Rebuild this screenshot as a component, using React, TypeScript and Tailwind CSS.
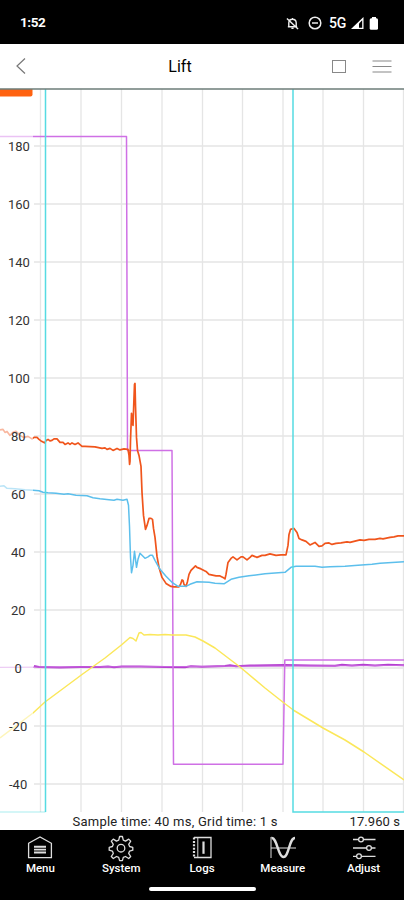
import React from "react";

const GRID_X = [40.5, 81, 121.5, 162, 202.5, 242.5, 283, 323, 363.5, 403.5];
const TICKS = [180, 160, 140, 120, 100, 80, 60, 40, 20, 0, -20, -40];
const tickY = (v: number) => 668 - v * 2.9;

const ORANGE =
  "M0 429.5 L3 429 L5 432 L7 431 L10 435 L13 432 L16 431 L20 435 L24 437 L28 436 L32 438.5 L34 437 L37 437 L39 439 L41 440.5 L43 441.5 L45 442.5 L46 440 L48 439 L50 440.5 L52 440 L54 438.5 L57 438.5 L60 442 L63 442 L65 444 L68 442.5 L70 444 L72 442.5 L75 444 L78 442.5 L82 446 L85 446 L95 446.5 L102 448 L105 447.5 L107 449 L110 448 L113 450 L117 448 L120 449.5 L124 448.5 L128 449 L129 455 L129.6 464 L130 461 L130.5 440 L131.5 413 L132.5 422 L133 425 L134.5 384 L135 383 L135.5 405 L136.5 437 L137.5 450 L139 455 L141 466 L142 492 L143.5 515 L145.5 529 L147 525 L149 518 L151 518 L152.5 519 L153.5 528 L155 537 L157 556 L159 567 L162 577 L166 583 L171 586 L174 586.5 L179 586.5 L180.5 584 L182 579.5 L183 580 L184 584 L186 586 L187.5 581 L189 574 L191 570 L194 567 L195.5 565.5 L197 567 L201 568.5 L206 571 L209 574 L216 575.5 L220 575.5 L223 577 L225 578.5 L226 574 L228 562 L231 558 L233 556.5 L237 559.5 L241 556.5 L243 556.5 L247 559.5 L250 557 L252 555 L257 557 L262 555 L265 555 L270 553.5 L276 555 L281 554.5 L286 554.5 L288 545 L289 534 L290.5 529 L294 528 L297 532 L299 538 L302 539.5 L306 541 L310 544.5 L315 542 L319 546 L322 545.5 L325 543 L329 542.5 L332 544 L336 543 L341 542.5 L347 541.5 L350 542 L356 540.5 L360 539.5 L364 540 L369 539 L375 539 L380 538 L383 538.5 L390 537 L394 536.5 L398 535.5 L404 535.5";

const BLUE =
  "M0 486 L4 485.5 L7 488 L15 488.5 L25 489.5 L33 490 L39 490.5 L43 492 L48 492.5 L56 493 L64 494 L68 493.5 L76 495 L87 495.5 L93 497.5 L100 498.5 L109 499.5 L114 500 L117 499 L123 500 L127 499 L128.5 505 L129.5 526 L130.5 557 L131.5 572.5 L133 565 L134.5 551 L136.5 567 L138 559 L140 553 L142 555 L145 558 L148 556.5 L150 555 L152.5 555 L155 560 L160 569 L166 576 L172 582 L178 586 L186 586 L190 584 L197 581.5 L209 582 L215 583 L224 583.5 L231 579 L239 577 L249 575.5 L265 573.5 L285 572 L291 567 L296 566 L315 566 L322 567 L330 566.5 L345 566 L358 565 L372 564 L380 563 L404 561.5";

const YELLOW =
  "M0 738 L33 713 L45 702 L82 674.5 L105 658 L122 644.5 L130 637.5 L133 638.5 L136 641 L139 633 L141 632.5 L144 635 L150 634.5 L158 635 L165 634.5 L172 635 L186 635 L195 637 L203 641 L215 648 L240 667 L265 688 L284 703 L294 710.5 L323 728 L345 740 L364 752 L404 780";

const PURPLE =
  "M0 136.5 H126.5 L127.5 450.5 H172 L173.5 764.2 H283 L284.8 660 H404";

const BASELINE =
  "M34 666 L39 667 L60 667.5 L80 667 L100 667 L108 666.5 L114 667.2 L122 666.5 L140 666.5 L165 667 L185 667.2 L191 666.3 L202 666.8 L225 666 L230 665.2 L236 666.2 L250 665.5 L285 665 L310 665.6 L335 665.8 L342 664.8 L352 665.6 L363 664.8 L375 665.6 L388 664.8 L404 665.2";

function Chart() {
  return (
    <svg className="block h-[742px] w-full shrink-0" viewBox="0 88 404 742" fill="none" fontFamily="Roboto, sans-serif">
      <g stroke="#e5e5e5" strokeWidth="1.3">
        {GRID_X.map((x) => (
          <path key={x} d={`M${x} 89V812`} />
        ))}
        {TICKS.map((v) => (
          <path key={v} d={`M34 ${tickY(v)}H404`} />
        ))}
      </g>
      <g strokeLinejoin="round">
        <path d={BASELINE} stroke="#b43fd0" strokeWidth="2" />
        <path d="M0 667.3 L404 665.5" stroke="#ca68df" strokeWidth="1" />
        <path d={PURPLE} stroke="#cf70e5" strokeWidth="1.5" />
        <path d={YELLOW} stroke="#fbe75a" strokeWidth="1.5" />
        <path d={ORANGE} transform="translate(0 0.4)" stroke="#f0551c" strokeWidth="1.7" />
        <path d={BLUE} transform="translate(0 0.3)" stroke="#5cbfec" strokeWidth="1.5" />
      </g>
      <rect x="0" y="90" width="33" height="738" fill="#fff" fillOpacity="0.58" />
      <path d="M45.5 89V812" stroke="#56dbe2" strokeWidth="1.5" />
      <path d="M45.5 812H0" stroke="#56dbe2" strokeOpacity="0.5" strokeWidth="1.2" />
      <path d="M293 89V812H404" stroke="#56dbe2" strokeWidth="1.5" />
      <path d="M0 89H32.5V94.5Q32.5 96.5 30.5 96.5H0Z" fill="#ff6210" />
      <path d="M0 89H404" stroke="#6c7c78" strokeWidth="1.4" />
      <g fill="#333" fontSize="13">
        {TICKS.map((v) => (
          <text key={v} x={v >= 100 ? 8 : v < 0 ? 9 : v === 0 ? 14.5 : 11} y={tickY(v) + 4.5}>
            {v}
          </text>
        ))}
        <text x="72.5" y="826" textLength="205" fill="#222">Sample time: 40 ms, Grid time: 1 s</text>
        <text x="349.5" y="826" textLength="50.5" fill="#222">17.960 s</text>
      </g>
    </svg>
  );
}

const ICONS: Record<string, React.ReactNode> = {
  Menu: (
    <>
      <path d="M1.6 8.3L13 2L24.4 8.3V22.7H1.6Z" />
      <path d="M7 11.7H19M7 14.6H19M7 17.5H19" strokeWidth="1.9" />
    </>
  ),
  System: (
    <>
      <path d="M11.6 1.5h2.8l.9 3.7 2.2.9 3.2-2 2 2-2 3.2.9 2.2 3.2.9v2.8l-3.2.9-.9 2.2 2 3.2-2 2-3.2-2-2.2.9-.9 3.2h-2.8l-.9-3.2-2.2-.9-3.2 2-2-2 2-3.2-.9-2.2-3.2-.9v-2.8l3.2-.9.9-2.2-2-3.2 2-2 3.2 2 2.2-.9Z" strokeLinejoin="round" />
      <circle cx="13" cy="13.2" r="3.8" />
    </>
  ),
  Logs: (
    <>
      <path d="M5 2.5H22V22.5H5" />
      <path d="M5 2.5V22.5" strokeWidth="2.2" strokeDasharray="2 1.4" />
      <path d="M8.8 3V22" strokeWidth="1" />
      <path d="M14.5 6.5V18.8" strokeWidth="2.2" />
    </>
  ),
  Measure: (
    <>
      <path d="M1 2V23M1 13H26" strokeWidth="1" />
      <path d="M1.5 3C7 2 8 22 13.5 22S19 3 25 3" strokeWidth="2.4" />
    </>
  ),
  Adjust: (
    <>
      <path d="M2 4.5H7.5M12.5 4.5H24.5M2 13H15.5M20.5 13H24.5M2 21.3H5.5M10.5 21.3H24.5" />
      <circle cx="10" cy="4.5" r="2.4" />
      <circle cx="18" cy="13" r="2.4" />
      <circle cx="8" cy="21.3" r="2.4" />
    </>
  ),
};

function StatusBar() {
  return (
    <div className="flex h-11 shrink-0 items-center bg-black pl-[20px] pr-[25px] pt-0.5 text-white">
      <span className="text-[13.5px] font-bold leading-none tracking-[-0.4px]">1:52</span>
      <svg className="ml-auto h-[13px] w-[13px]" viewBox="0 0 14 14" fill="none" stroke="#eee" strokeWidth="1.5">
        <path d="M3 10.5V6.2A4 4 0 0 1 7 2.5A4 4 0 0 1 11 6.2V10.5M2 10.5H12M1 1.5L13 13M7 1V2.5M5.8 12.3H8.2" />
      </svg>
      <svg className="ml-[9px] h-[14px] w-[14px]" viewBox="0 0 14 14" fill="none" stroke="#eee" strokeWidth="1.5">
        <circle cx="7" cy="7" r="5.8" />
        <path d="M4 7H10" />
      </svg>
      <span className="ml-[7px] w-[18px] text-[14px] font-medium leading-none tracking-[-0.3px]">5G</span>
      <svg className="ml-[4px] h-3 w-[13px]" viewBox="0 0 13 12">
        <path d="M0 12L12.5 0V12Z" fill="#fff" />
        <path d="M8 6.5L11.2 3.3V10.7H8Z" fill="#000" />
      </svg>
      <svg className="ml-[5px] h-[13px] w-[10px]" viewBox="0 0 10 13" fill="#fff">
        <rect x="0.7" y="1.3" width="8.3" height="11.5" rx="1.5" />
        <rect x="3" y="0" width="4" height="2" />
      </svg>
    </div>
  );
}

export default function App() {
  return (
    <div className="flex h-[900px] w-[404px] flex-col overflow-hidden bg-white font-[Roboto,sans-serif]">
      <StatusBar />
      <header className="grid h-11 shrink-0 grid-cols-3 items-center bg-white pl-4 pr-3">
        <svg className="h-4 w-[10px]" viewBox="0 0 10 16" fill="none" stroke="#777" strokeWidth="1.2">
          <path d="M9 0.5L1 8L9 15.5" />
        </svg>
        <h1 className="-ml-[48px] pt-[2px] text-center text-base leading-none text-black">Lift</h1>
        <div className="flex items-center justify-end gap-[26px]">
          <span className="h-[13px] w-[14px] border border-[#888]" />
          <svg className="h-[13px] w-[20px]" viewBox="0 0 20 13" stroke="#888" strokeWidth="1.2">
            <path d="M0.5 1H19.5M0.5 6.5H19.5M0.5 12H19.5" />
          </svg>
        </div>
      </header>
      <Chart />
      <nav className="flex h-[70px] shrink-0 flex-col bg-black text-white">
        <div className="grid grid-cols-5 pt-[5px]">
          {Object.entries(ICONS).map(([name, icon]) => (
            <div key={name} className="flex flex-col items-center">
              <svg className="h-[26px] w-[26px] overflow-visible" viewBox="0 0 26 26" fill="none" stroke="#ddd" strokeWidth="1.3">
                {icon}
              </svg>
              <span className="mt-[1px] text-[11.5px] font-medium leading-[13px]">{name}</span>
            </div>
          ))}
        </div>
        <div className="mx-auto mt-[12px] h-1 w-[107px] rounded-full bg-white" />
      </nav>
    </div>
  );
}
